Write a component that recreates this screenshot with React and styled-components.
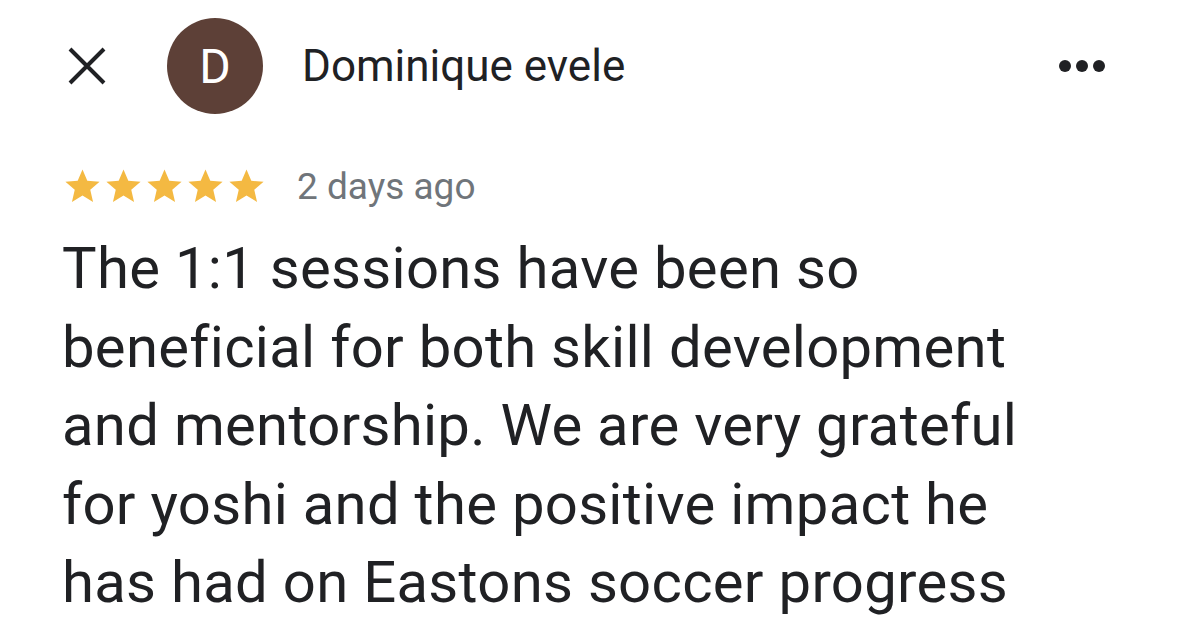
import React from 'react'
import styled, { createGlobalStyle } from 'styled-components'

const GlobalStyle = createGlobalStyle`
  html, body {
    margin: 0;
    padding: 0;
    background: #ffffff;
  }
  body {
    font-family: Roboto, "Liberation Sans", sans-serif;
    color: #202124;
  }
`

const Page = styled.div`
  width: 1179px;
  height: 630px;
  overflow: hidden;
  background: #fff;
  padding: 18px 0 0 62px;
  box-sizing: border-box;
`

const Header = styled.div`
  display: flex;
  align-items: center;
  height: 96px;
  padding-right: 74px;
`

const CloseBtn = styled.div`
  width: 50px;
  height: 50px;
  display: flex;
  align-items: center;
  justify-content: center;
  margin-right: 55px;
`

const Avatar = styled.div`
  width: 96px;
  height: 96px;
  border-radius: 50%;
  background: #5d4037;
  color: #fff;
  display: flex;
  align-items: center;
  justify-content: center;
  font-size: 48px;
  margin-right: 39px;
`

const Name = styled.div`
  flex: 1;
  font-size: 44px;
  color: #202124;
`

const More = styled.div`
  display: flex;
  gap: 5px;
  span {
    width: 12px;
    height: 12px;
    border-radius: 50%;
    background: #202124;
  }
`

const Meta = styled.div`
  display: flex;
  align-items: center;
  margin-top: 52px;
  height: 40px;
`

const Stars = styled.div`
  display: flex;
  margin-right: 30px;
`

const Since = styled.div`
  font-size: 37px;
  color: #70757a;
`

const Body = styled.p`
  margin: 23px 0 0 0;
  font-size: 58px;
  line-height: 78.5px;
  letter-spacing: 0.3px;
  color: #202124;
  white-space: nowrap;
`

const Line = styled.span`
  display: block;
`

const Star = () => (
  <svg width="41" height="41" viewBox="0 0 24 24">
    <path fill="#f4b942" d="M12 17.27L18.18 21l-1.64-7.03L22 9.24l-7.19-.61L12 2 9.19 8.63 2 9.24l5.46 4.73L5.82 21z" />
  </svg>
)

const lines = [
  'The 1:1 sessions have been so',
  'beneficial for both skill development',
  'and mentorship. We are very grateful',
  'for yoshi and the positive impact he',
  'has had on Eastons soccer progress',
]

export default function App() {
  return (
    <>
      <GlobalStyle />
      <Page>
        <Header>
          <CloseBtn>
            <svg width="40" height="40" viewBox="0 0 40 40">
              <path d="M3 3 L37 37 M37 3 L3 37" stroke="#202124" strokeWidth="4" />
            </svg>
          </CloseBtn>
          <Avatar>D</Avatar>
          <Name>Dominique evele</Name>
          <More><span /><span /><span /></More>
        </Header>
        <Meta>
          <Stars>{[0, 1, 2, 3, 4].map(i => <Star key={i} />)}</Stars>
          <Since>2 days ago</Since>
        </Meta>
        <Body>
          {lines.map(l => <Line key={l}>{l}</Line>)}
        </Body>
      </Page>
    </>
  )
}
